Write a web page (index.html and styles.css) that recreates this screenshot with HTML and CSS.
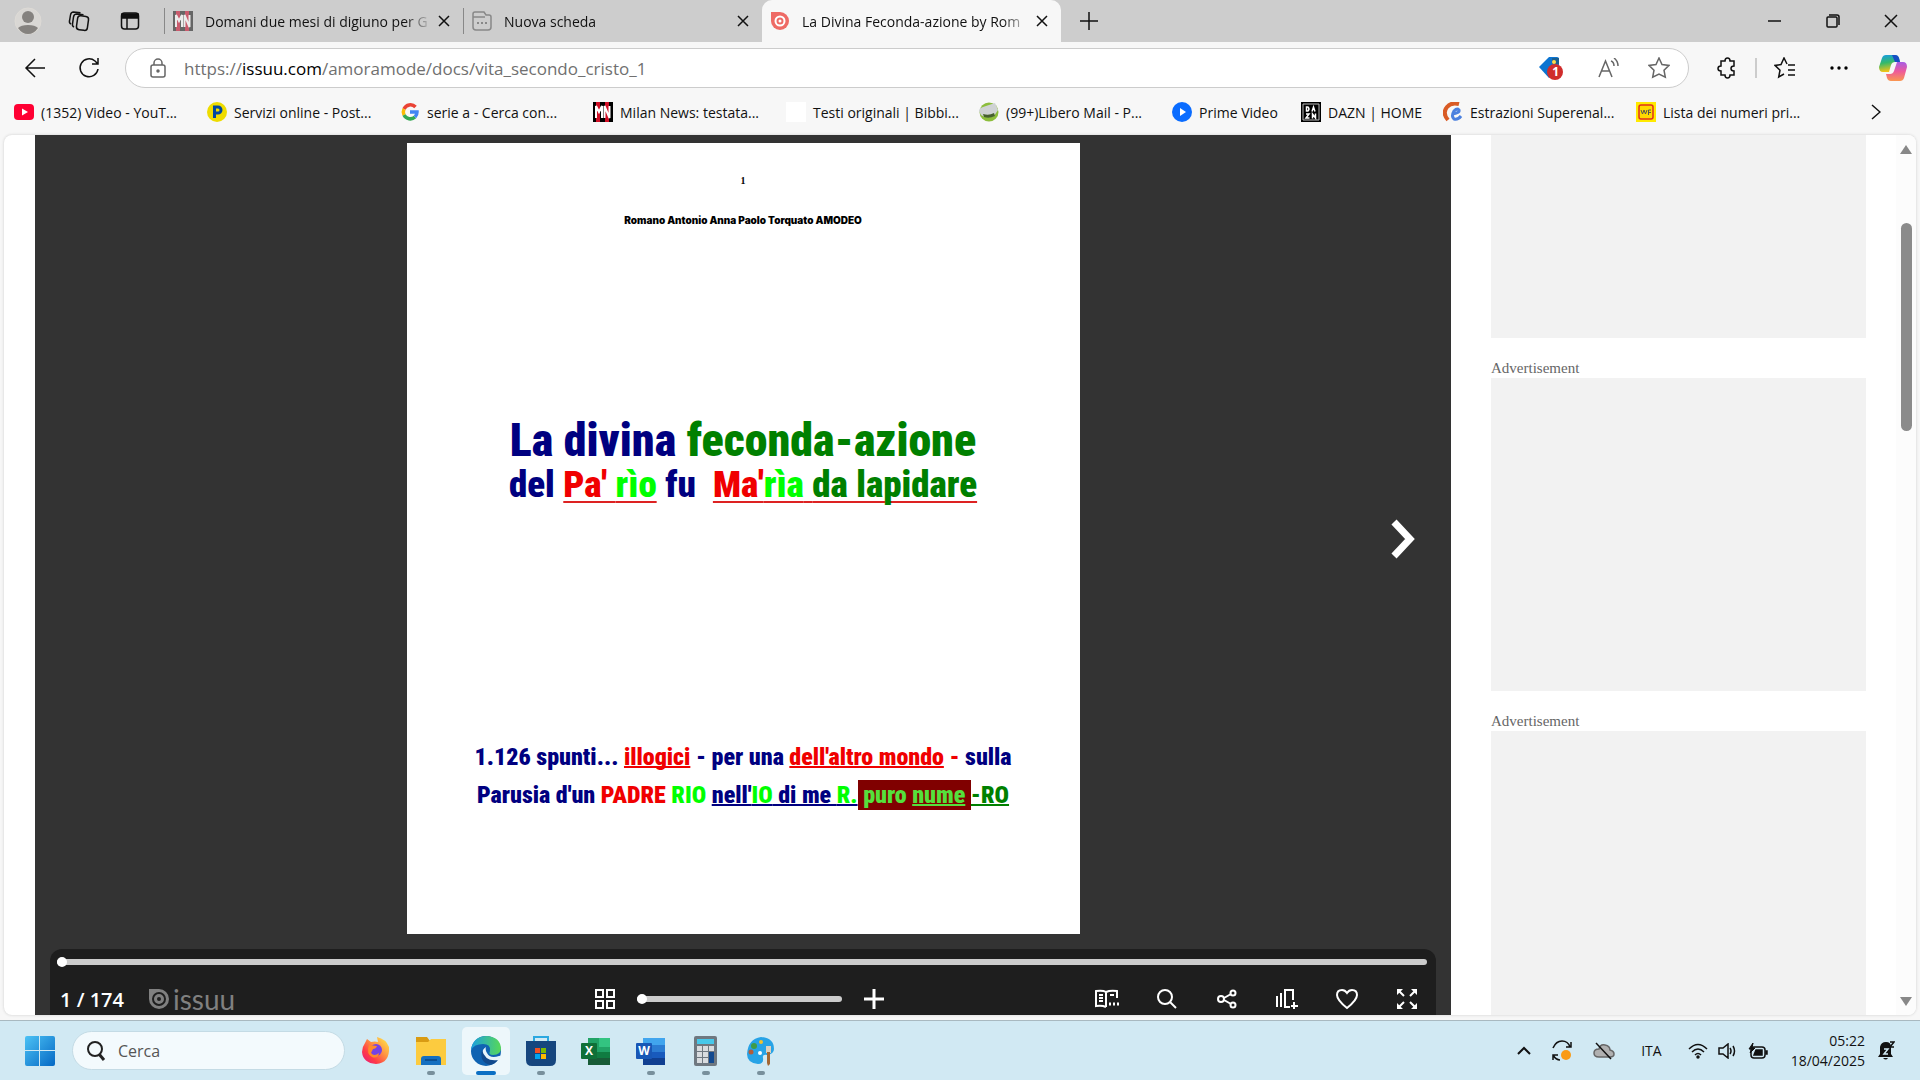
FILE: index.html
```
<!DOCTYPE html>
<html lang="it">
<head>
    <meta charset="UTF-8">
    <meta name="viewport" content="width=device-width, initial-scale=1.0">
    <title>La Divina Feconda-azione by Romano Amodeo - Issuu</title>
    <link rel="stylesheet" href="styles.css">
</head>
<body>

    <!-- Barra delle schede -->
    <header class="tab-strip">
        <div class="strip-tools">
            <button class="icon-button" aria-label="Profilo">
                <svg width="28" height="28" viewBox="0 0 28 28"><circle cx="14" cy="14" r="13" fill="#d9d7d4" stroke="#dedbd6"/><circle cx="14" cy="10" r="6" fill="#85827f"/><path d="M4 21q3-3 10-3t10 3q-4 6-10 6t-10-6z" fill="#85827f"/></svg>
            </button>
            <button class="icon-button" aria-label="Aree di lavoro">
                <svg width="22" height="22" viewBox="0 0 22 22" class="line"><rect x="9" y="6" width="11" height="14" rx="3" transform="rotate(8 14 13)"/><path d="M6 17q-2-1-1.500-3l1-7q.5-3 3-3l7 .8M3 14q-2-1-1.500-3l1-6q.5-3 3-3l7 .8"/></svg>
            </button>
            <button class="icon-button" aria-label="Schede verticali">
                <svg width="20" height="20" viewBox="0 0 20 20" class="line"><rect x="1.500" y="2" width="17" height="16" rx="3"/><path d="M2 3h16v4H2z" fill="#111"/><path d="M7 7v11"/></svg>
            </button>
        </div>
        <nav class="tabs">
            <div class="tab">
                <svg class="favicon faded" viewBox="0 0 20 20"><path fill="#222" d="M0 0h20v20H0z"/><path fill="#c8102e" d="M3 0h4v20H3zM12 0h4v20h-4z"/><path d="M3 16V4l3 6 3-6v12M11.500 16V4l5 12V4" fill="none" stroke="#fff" stroke-width="2"/></svg>
                <a href="#" class="tab-title">Domani due mesi di digiuno per G</a>
                <button class="tab-close" aria-label="Chiudi scheda"><svg width="12" height="12" viewBox="0 0 12 12" class="line"><path d="M1 1l10 10M11 1L1 11"/></svg></button>
            </div>
            <div class="tab">
                <svg class="favicon" viewBox="0 0 20 20" fill="none" stroke="#888" stroke-width="1.500"><path d="M3 1h9l2 3h3q2 0 2 2v10q0 3-3 3H4q-3 0-3-3V3q0-2 2-2zM1 6h12"/><path d="M5 12h2M9 12h2M13 12h2" stroke-width="2"/></svg>
                <a href="#" class="tab-title">Nuova scheda</a>
                <button class="tab-close" aria-label="Chiudi scheda"><svg width="12" height="12" viewBox="0 0 12 12" class="line"><path d="M1 1l10 10M11 1L1 11"/></svg></button>
            </div>
            <div class="tab active">
                <svg class="favicon" viewBox="0 0 20 20"><path fill="#ee6a65" d="M1 1h9a9 9 0 1 1-9 9z"/><circle cx="10" cy="10" r="4.500" fill="none" stroke="#fff" stroke-width="2"/><circle cx="10" cy="10" r="1.500" fill="#fff"/></svg>
                <a href="#" class="tab-title">La Divina Feconda-azione by Rom</a>
                <button class="tab-close" aria-label="Chiudi scheda"><svg width="12" height="12" viewBox="0 0 12 12" class="line"><path d="M1 1l10 10M11 1L1 11"/></svg></button>
            </div>
            <button class="icon-button new-tab" aria-label="Nuova scheda"><svg width="18" height="18" viewBox="0 0 18 18" class="line"><path d="M9 0v18M0 9h18"/></svg></button>
        </nav>
        <div class="window-buttons">
            <button aria-label="Riduci"><svg width="14" height="14" viewBox="0 0 14 14" class="line"><path d="M0 7h13"/></svg></button>
            <button aria-label="Ripristina"><svg width="14" height="14" viewBox="0 0 14 14" class="line"><rect x="1" y="3" width="10" height="10" rx="1"/><path d="M3 1h8q2 0 2 2v8"/></svg></button>
            <button aria-label="Chiudi"><svg width="14" height="14" viewBox="0 0 14 14" class="line"><path d="M1 1l12 12M13 1L1 13"/></svg></button>
        </div>
    </header>

    <!-- Barra degli indirizzi -->
    <div class="toolbar">
        <button class="icon-button" aria-label="Indietro"><svg width="22" height="22" viewBox="0 0 22 22" class="line"><path d="M21 11H2M11 2l-9 9 9 9"/></svg></button>
        <button class="icon-button" aria-label="Aggiorna"><svg width="22" height="22" viewBox="0 0 22 22" class="line"><path d="M20 12a9 9 0 1 1-3-8l3 3M20 1v6h-6"/></svg></button>
        <div class="address-bar">
            <svg width="16" height="20" viewBox="0 0 16 20" class="line gray"><rect x="1" y="7" width="14" height="12" rx="2"/><path d="M4 7V5a4 4 0 0 1 8 0v2"/><circle cx="8" cy="13" r="1" fill="#555"/></svg>
            <a href="#" class="url">https://<b>issuu.com</b>/amoramode/docs/vita_secondo_cristo_1</a>
            <button class="icon-button shopping" aria-label="Acquisti"><svg width="26" height="24" viewBox="0 0 26 24"><path d="M1 11L11 1h8q2 0 2 2v9L11 22z" fill="#0b74d1"/><path d="M14 2h7v6h-7z" fill="#1b5f8f"/><circle cx="16" cy="6" r="2" fill="#ffd94a"/><circle cx="17" cy="16" r="8" fill="#d02c2c"/></svg><span class="badge">1</span></button>
            <button class="icon-button" aria-label="Leggi ad alta voce"><svg width="22" height="20" viewBox="0 0 22 20" class="line gray"><path d="M1 19L7.500 3 14 19M3.500 13h8M13 3q3 1 3 5M16 0q4 3 4 8"/></svg></button>
            <button class="icon-button" aria-label="Preferiti"><svg width="22" height="22" viewBox="0 0 22 22" class="line gray"><path d="M11 1l3 6.500 7 .9-5 4.800 1.300 7L11 17l-6.300 3.200L6 13.200 1 8.400l7-.9z"/></svg></button>
        </div>
        <button class="icon-button" aria-label="Estensioni"><svg width="22" height="22" viewBox="0 0 22 22" class="line"><path d="M5 4h4q0-3 2.500-3T14 4h4v5q-3 0-3 2.500T18 14v4h-4q0 3-2.500 3T9 18H5v-4q-3 0-3-2.500T5 9z"/></svg></button>
        <span class="separator"></span>
        <button class="icon-button" aria-label="Elenco preferiti"><svg width="22" height="22" viewBox="0 0 22 22" class="line"><path d="M13 7l-3-6-3 6.500-6 .9 5 4.800L4.700 20l5.300-3M14 8h7M14 13h7M14 18h7"/></svg></button>
        <button class="icon-button more" aria-label="Impostazioni e altro"><svg width="18" height="4" viewBox="0 0 18 4"><circle cx="2" cy="2" r="1.700"/><circle cx="9" cy="2" r="1.700"/><circle cx="16" cy="2" r="1.700"/></svg></button>
        <button class="icon-button copilot" aria-label="Copilot">
            <svg width="28" height="26" viewBox="0 0 28 26">
                <defs>
                    <linearGradient id="cop1" x2="0.2" y2="1"><stop offset="0" stop-color="#159bea"/><stop offset=".5" stop-color="#35b96a"/><stop offset="1" stop-color="#f2c418"/></linearGradient>
                    <linearGradient id="cop2" x2="0" y2="1"><stop offset="0" stop-color="#a75de5"/><stop offset=".5" stop-color="#ee5a9a"/><stop offset="1" stop-color="#fa9750"/></linearGradient>
                </defs>
                <path d="M7 0h9q3 0 4 3l1 4h-5q-3 0-4 3l-2 7H4q-4 0-4-5L3 3q1-3 4-3z" fill="url(#cop1)"/>
                <path d="M13 0h3q3 0 4 3l1 4h-5z" fill="#174fc4"/>
                <path d="M21 26h-9q-3 0-4-3l-1-4h4q3 0 4-3l3-9h6q4 0 4 5l-3 11q-1 3-4 3z" fill="url(#cop2)"/>
            </svg>
        </button>
    </div>

    <!-- Barra dei preferiti -->
    <nav class="bookmarks">
        <a href="#" class="bookmark"><svg viewBox="0 0 20 20"><rect y="2" width="20" height="16" rx="4" fill="#ff0033"/><path d="M8 6.500v7l6-3.500z" fill="#fff"/></svg><span>(1352) Video - YouT...</span></a>
        <a href="#" class="bookmark"><svg viewBox="0 0 20 20"><circle cx="10" cy="10" r="10" fill="#eedc00"/><path d="M7.500 16V5h3.500a3 3 0 0 1 0 6H8" fill="none" stroke="#0047a0" stroke-width="3"/></svg><span>Servizi online - Post...</span></a>
        <a href="#" class="bookmark"><svg viewBox="0 0 20 20" fill="none" stroke-width="3.500"><path d="M15.500 5A7 7 0 0 0 4 7" stroke="#ea4335"/><path d="M4 7a7 7 0 0 0 0 6" stroke="#fbbc05"/><path d="M4 13a7 7 0 0 0 11 2" stroke="#34a853"/><path d="M15 15a7 7 0 0 0 2-5h-7" stroke="#4285f4"/></svg><span>serie a - Cerca con...</span></a>
        <a href="#" class="bookmark"><svg viewBox="0 0 20 20"><path d="M0 0h20v20H0z"/><path fill="#d01027" d="M3 0h4v20H3zM12 0h4v20h-4z"/><path d="M3 16V4l3 6 3-6v12M11.500 16V4l5 12V4" fill="none" stroke="#fff" stroke-width="2"/></svg><span>Milan News: testata...</span></a>
        <a href="#" class="bookmark"><svg viewBox="0 0 20 20"><path d="M0 0h20v20H0z" fill="#fff"/></svg><span>Testi originali | Bibbi...</span></a>
        <a href="#" class="bookmark"><svg viewBox="0 0 20 20"><circle cx="10" cy="10" r="9.500" fill="#8cbd3b"/><path d="M0 9q0-3 4-4l12-4 3 7-4 6q-8 3-13-1z" fill="#cfd2d4"/><path d="M4 12q6 2 11-1l1 3q-6 3-11 1z" fill="#46602e"/></svg><span>(99+)Libero Mail - P...</span></a>
        <a href="#" class="bookmark prime"><svg viewBox="0 0 20 20"><circle cx="10" cy="10" r="10" fill="#0a6cff"/><path d="M8 6v8l6-4z" fill="#fff"/></svg><span>Prime Video</span></a>
        <a href="#" class="bookmark dazn"><svg viewBox="0 0 20 20"><path d="M0 0h20v20H0z"/><path d="M2 2h16v16H2z" fill="none" stroke="#bbb"/><path d="M5.500 5v4H7q2-2 0-4zM11 9.500L12.500 5 14 9.500M5 12h3l-3 4h3.500M11.500 16.500V12l3 4v-4.500" fill="none" stroke="#fff" stroke-width="1.500"/></svg><span>DAZN | HOME</span></a>
        <a href="#" class="bookmark"><svg viewBox="0 0 20 20" fill="none"><path d="M5 18Q-1 11 4 5q4-5 12-3" stroke="#d95b25" stroke-width="4"/><path d="M9 12q8-1 7-4-2-2-5 1-3 5 0 8 4 1 7-3" stroke="#4b80df" stroke-width="3"/></svg><span>Estrazioni Superenal...</span></a>
        <a href="#" class="bookmark"><svg viewBox="0 0 20 20"><path d="M0 0h20v20H0z" fill="#ffea00"/><rect x="3" y="3" width="14" height="14" rx="2" fill="#ffd900" stroke="#e0301e" stroke-width="1.500"/><path d="M5 8l1.500 4L8 8l1.500 4L11 8M12.500 13V8H15M12.500 10.500H15" fill="none" stroke="#555"/></svg><span>Lista dei numeri pri...</span></a>
        <button class="icon-button overflow" aria-label="Altri preferiti"><svg width="10" height="16" viewBox="0 0 10 16" class="line"><path d="M1 1l8 7-8 7"/></svg></button>
    </nav>

    <!-- Contenuto della pagina -->
    <div class="viewport">
        <main class="reader">
            <article class="sheet">
                <p class="page-number">1</p>
                <p class="author">Romano Antonio Anna Paolo Torquato AMODEO</p>
                <h1 class="title">
                    La divina <span class="green">feconda-azione</span>
                    <small>del <u><span class="red">Pa' </span><span class="lime">rìo</span></u> fu&nbsp; <u><span class="red">Ma'</span><span class="lime">rìa</span> <span class="green">da lapidare</span></u></small>
                </h1>
                <p class="subtitle">
                    1.126 spunti... <u class="red">illogici</u> - per una <u class="red">dell'altro mondo</u><span class="red"> -</span> sulla<br>
                    Parusia d'un <span class="red">PADRE</span> <span class="lime">RIO</span> <u>nell'<span class="lime">IO</span> di me <span class="lime">R.</span></u><mark>&nbsp;puro <u>nume</u>&nbsp;</mark><u class="green">-RO</u>
                </p>
            </article>
            <button class="next-page" aria-label="Pagina successiva"><svg width="24" height="40" viewBox="0 0 24 40"><path d="M3 3l16 17L3 37" fill="none" stroke="#fff" stroke-width="7"/></svg></button>
            <div class="controls">
                <input type="range" class="progress" min="1" max="174" value="1" aria-label="Pagina">
                <div class="control-row">
                    <div class="control-left">
                        <span class="counter">1 / 174</span>
                        <a href="#" class="brand"><svg width="20" height="20" viewBox="0 0 20 20"><path fill="#808080" d="M0 0h10a10 10 0 1 1-10 10z"/><circle cx="10" cy="10" r="6" fill="none" stroke="#1e1e1e" stroke-width="2"/><circle cx="10" cy="10" r="2" fill="#1e1e1e"/></svg>issuu</a>
                    </div>
                    <div class="control-zoom">
                        <button aria-label="Miniature"><svg width="20" height="20" viewBox="0 0 20 20"><path d="M1 1h7v7H1zM12 1h7v7h-7zM1 12h7v7H1zM12 12h7v7h-7z"/></svg></button>
                        <input type="range" class="zoom" min="0" max="100" value="0" aria-label="Zoom">
                        <button aria-label="Ingrandisci"><svg width="20" height="20" viewBox="0 0 20 20"><path d="M10 0v20M0 10h20" stroke-width="3"/></svg></button>
                    </div>
                    <div class="control-right">
                        <button aria-label="Leggi articolo"><svg width="24" height="20" viewBox="0 0 24 20"><path d="M11 18q-4-2-10-1V2q7-1 10 1v15M11 3q4-2 11-1v7M4 6h4M4 9h4M4 12h4M15 6h4"/><path d="M14 15h2M18 15h2M22 15h2" stroke-width="3"/></svg></button>
                        <button aria-label="Cerca"><svg width="20" height="20" viewBox="0 0 20 20"><circle cx="8" cy="8" r="7"/><path d="M13 13l6 6"/></svg></button>
                        <button aria-label="Condividi"><svg width="20" height="20" viewBox="0 0 20 20"><circle cx="4" cy="10" r="3"/><circle cx="16" cy="4" r="2.500"/><circle cx="16" cy="16" r="2.500"/><path d="M7 9l7-4M7 11l7 4"/></svg></button>
                        <button aria-label="Aggiungi alla raccolta"><svg width="22" height="22" viewBox="0 0 22 22"><path d="M1 8v11M5 5v14M17 12V2H9v17h5M18 14v7M15 18h7"/></svg></button>
                        <button aria-label="Mi piace"><svg width="24" height="22" viewBox="0 0 24 22"><path d="M12 20Q2 12 2 7q0-5 5-5 3 0 5 3 2-3 5-3 5 0 5 5 0 5-10 13z"/></svg></button>
                        <button aria-label="Schermo intero"><svg width="20" height="20" viewBox="0 0 20 20"><path d="M1 1l6 6M19 1l-6 6M1 19l6-6M19 19l-6-6"/><path d="M0 0h6L0 6zM20 0v6l-6-6zM0 20v-6l6 6zM20 20h-6l6-6z" fill="#fff" stroke="none"/></svg></button>
                    </div>
                </div>
            </div>
        </main>
        <aside class="ads">
            <div class="ad first"></div>
            <span class="ad-label">Advertisement</span>
            <div class="ad"></div>
            <span class="ad-label">Advertisement</span>
            <div class="ad"></div>
        </aside>
        <div class="scrollbar">
            <svg width="14" height="10" viewBox="0 0 14 10"><path d="M7 0l6 9H1z"/></svg>
            <div class="scroll-track"><div class="scroll-thumb"></div></div>
            <svg width="14" height="10" viewBox="0 0 14 10"><path d="M7 10l6-9H1z"/></svg>
        </div>
    </div>

    <!-- Barra delle applicazioni -->
    <footer class="taskbar">
        <button class="start" aria-label="Start"><svg width="30" height="30" viewBox="0 0 30 30"><defs><linearGradient id="win" x2="1" y2="1"><stop offset="0" stop-color="#4cc2f5"/><stop offset="1" stop-color="#0568c4"/></linearGradient></defs><path fill="url(#win)" d="M2 0h12v14H0V2q0-2 2-2zM15 0h13q2 0 2 2v12H15zM0 15h14v15H2q-2 0-2-2zM15 15h15v13q0 2-2 2H15z"/></svg></button>
        <label class="search">
            <svg width="20" height="20" viewBox="0 0 20 20" fill="none" stroke="#222" stroke-width="2"><circle cx="9" cy="8" r="7"/><path d="M13 13l5 6" stroke-width="3"/></svg>
            <input type="text" placeholder="Cerca" aria-label="Cerca">
        </label>
        <div class="apps">
            <button aria-label="Firefox"><svg viewBox="0 0 30 30"><defs><linearGradient id="fox" x1="1" x2="0" y2="1"><stop offset="0" stop-color="#fff44f"/><stop offset=".4" stop-color="#ff9640"/><stop offset=".7" stop-color="#ff3b47"/><stop offset="1" stop-color="#e31587"/></linearGradient></defs><path fill="url(#fox)" d="M4 7l2-4 4 3q4-1 7 0l-1-5q9 2 12 10 1 16-13 17Q2 27 1 16q0-5 3-9z"/><circle cx="15" cy="14" r="6" fill="#7542e5"/><path d="M8 9l8 1q-1 3-4 3l-2 4q3 4 8 0-1 6-7 4-6-3-3-12z" fill="#ff8a2b"/></svg></button>
            <button class="running" aria-label="Esplora file"><svg viewBox="0 0 30 30"><path d="M0 1h11l3 4v5H0z" fill="#d99b13"/><path d="M0 6h12l3-3h15v26H0z" fill="#fccb3f"/><path d="M5 29v-6q0-3 3-3h14q3 0 3 3v6z" fill="#146fc0"/><path d="M9 24h12" stroke="#0a4f93" stroke-width="2"/></svg></button>
            <button class="running current" aria-label="Edge"><svg viewBox="0 0 30 30"><defs><linearGradient id="edge" x2="1"><stop offset="0" stop-color="#1a9fe0"/><stop offset="1" stop-color="#57d957"/></linearGradient></defs><circle cx="15" cy="15" r="15" fill="#1063b2"/><path d="M0 14Q2 0 16 0q13 1 14 12 0 7-8 7-5 0-3-4 1-7-7-7Q3 8 0 14z" fill="url(#edge)"/><path d="M15 11q-5 3-3 9 4 8 15 5l2-3q2-3-1-2-9 3-12-3-2-3-1-6z" fill="#e8f5fb"/><path d="M11 14q-3 12 8 15 5-1 8-5-13 2-16-10z" fill="#124a8d"/></svg></button>
            <button class="running" aria-label="Microsoft Store"><svg viewBox="0 0 30 30"><path d="M8 6V1h14v5" fill="none" stroke="#2ba8e0" stroke-width="2"/><path d="M0 5h30v19q0 6-6 6H6q-6 0-6-6z" fill="#16467e"/><path fill="#f25022" d="M9 12h5v5H9z"/><path fill="#7fba00" d="M15 12h5v5h-5z"/><path fill="#00a4ef" d="M9 18h5v5H9z"/><path fill="#ffb900" d="M15 18h5v5h-5z"/></svg></button>
            <button aria-label="Excel"><svg viewBox="0 0 30 30"><path d="M7 2h22v27H7z" fill="#21a366"/><path d="M18 2h11v9H18z" fill="#33c481"/><path d="M7 16h22v13H7z" fill="#107c41"/><path d="M7 22h22v7H7z" fill="#185c37"/><rect y="7" width="16" height="16" rx="1" fill="#0f7038"/></svg><span class="letter">X</span></button>
            <button class="running" aria-label="Word"><svg viewBox="0 0 30 30"><path d="M7 2h22v27H7z" fill="#41a5ee"/><path d="M7 9h22v20H7z" fill="#2b7cd3"/><path d="M7 16h22v13H7z" fill="#185abd"/><path d="M7 22h22v7H7z" fill="#103f91"/><rect y="7" width="16" height="16" rx="1" fill="#1857b6"/></svg><span class="letter">W</span></button>
            <button class="running" aria-label="Calcolatrice"><svg viewBox="0 0 30 30"><rect x="3" width="23" height="30" rx="2" fill="#6f7880"/><path d="M6 3h17v5H6z" fill="#47c8ea"/><path d="M6 10h5v5H6zM12 10h5v5h-5zM18 10h5v5h-5zM6 16h5v5H6zM12 16h5v5h-5zM6 22h5v5H6zM12 22h5v5h-5z" fill="#d9dcdf"/><path d="M18 16h5v11h-5z" fill="#134a8f"/></svg></button>
            <button class="running" aria-label="Paint"><svg viewBox="0 0 30 30"><path d="M15 1q13 1 13 12 0 5-7 6-5-1-4 3 1 6-5 6Q1 27 1 18 2 3 15 1z" fill="#27a3e6"/><circle cx="15" cy="6" r="2" fill="#f2c12e"/><circle cx="8" cy="10" r="3" fill="#3f9b46"/><circle cx="5" cy="16" r="2.500" fill="#b35c3b"/><circle cx="14" cy="17" r="2" fill="#fff"/><path d="M20 10h5v7h-5z" fill="#ddd0be"/><path d="M21 16h3v12l-2 2-1-3z" fill="#a36733"/></svg></button>
        </div>
        <div class="tray">
            <button aria-label="Mostra icone nascoste"><svg width="14" height="9" viewBox="0 0 14 9" class="line"><path d="M1 8l6-6 6 6" stroke-width="2"/></svg></button>
            <button aria-label="Aggiornamento"><svg width="22" height="22" viewBox="0 0 22 22" class="line"><path d="M2 8q3-7 9-7t8 6M20 2v5h-5M9 20q-4 0-7-5M2 20v-5h5"/><circle cx="15" cy="15" r="5" fill="#f99b16" stroke="none"/></svg></button>
            <button aria-label="OneDrive"><svg width="22" height="18" viewBox="0 0 22 18" class="line"><path d="M6 15q-5 0-5-4t5-4q1-5 6-4t5 5q4 1 4 4t-4 3z" fill="#b0b0b0" stroke="#666"/><path d="M3 1l15 16"/></svg></button>
            <button class="lang">ITA</button>
            <button class="quick" aria-label="Rete, volume e batteria">
                <svg width="20" height="16" viewBox="0 0 20 16" class="line"><path d="M1 6q9-9 18 0M4 9q6-6 12 0M7 12q3-3 6 0"/><circle cx="10" cy="14" r="1" fill="#111"/></svg>
                <svg width="20" height="16" viewBox="0 0 20 16" class="line"><path d="M1 5h4l5-4v14l-5-4H1zM12 5q2 3 0 6M15 3q3 5 0 10"/></svg>
                <svg width="20" height="16" viewBox="0 0 20 16" class="line"><rect x="3" y="4" width="14" height="11" rx="3"/><path d="M8 7h6v5H6zM18 8h1v3h-1z" fill="#111"/><path d="M5 0L1 6h3L2 10l5-5H4z" fill="#111" stroke-width="1"/></svg>
            </button>
            <div class="clock"><time>05:22</time><span>18/04/2025</span></div>
            <button aria-label="Notifiche"><svg width="18" height="20" viewBox="0 0 18 20"><path d="M3 6q1-5 6-5t5 5v7l2 3H1l2-3zM6 17h5q-2 3-5 0z" fill="#111"/><path d="M7 8h4l-4 5h4" fill="none" stroke="#d1e9f3" stroke-width="1.500"/><path d="M13 1h4l-4 5h4" fill="none" stroke="#111" stroke-width="1.500"/></svg></button>
        </div>
    </footer>

</body>
</html>
```

FILE: styles.css
```
* {
    box-sizing: border-box;
}

body {
    margin: 0;
    height: 100vh;
    display: flex;
    flex-direction: column;
    overflow: hidden;
    background: #f7f7f7;
    color: #111;
    font-family: 'Open Sans', 'Noto Sans', sans-serif;
    font-size: 14px;
}

a {
    color: inherit;
    text-decoration: none;
}

button {
    display: flex;
    align-items: center;
    justify-content: center;
    padding: 0;
    border: none;
    background: none;
    color: inherit;
    font: inherit;
}

svg {
    display: block;
    flex-shrink: 0;
}

.line {
    fill: none;
    stroke: #111;
    stroke-width: 1.5;
}

.line.gray {
    stroke: #666;
}

.icon-button {
    width: 32px;
    height: 32px;
    flex-shrink: 0;
}

/* Barra delle schede */
.tab-strip {
    display: flex;
    height: 42px;
    flex-shrink: 0;
    background: #cdcdcd;
}

.strip-tools {
    display: flex;
    align-items: center;
    gap: 19px;
    width: 164px;
    padding-left: 12px;
}

.tabs {
    display: flex;
    align-items: center;
    flex: 1;
}

.tab {
    display: flex;
    align-items: center;
    width: 299px;
    height: 26px;
    padding: 0 9px 0 8px;
    border-left: 1px solid #888;
}

.tab.active {
    height: 42px;
    background: #f7f7f7;
    border-left: none;
    border-radius: 10px 10px 0 0;
}

.favicon {
    width: 20px;
    height: 20px;
}

.favicon.faded {
    opacity: 0.6;
}

.tab-title {
    flex: 1;
    margin: 0 2px 0 12px;
    white-space: nowrap;
    mask-image: linear-gradient(to right, #000 88%, transparent);
}

.tab-close {
    width: 20px;
    height: 20px;
}

.new-tab {
    margin-left: 12px;
}

.window-buttons {
    display: flex;
}

.window-buttons button {
    width: 58px;
}

/* Barra degli indirizzi */
.toolbar {
    display: flex;
    align-items: center;
    height: 52px;
    flex-shrink: 0;
    padding: 0 11px 0 19px;
    gap: 22px;
}

.address-bar {
    display: flex;
    align-items: center;
    flex: 1;
    height: 40px;
    margin-left: -2px;
    padding: 0 13px 0 24px;
    gap: 18px;
    background: #fff;
    border: 1px solid #ccc;
    border-radius: 20px;
}

.url {
    flex: 1;
    font-size: 17px;
    color: #707070;
}

.url b {
    font-weight: normal;
    color: #000;
}

.shopping {
    position: relative;
    margin-right: 8px;
}

.badge {
    position: absolute;
    right: 8px;
    bottom: 4px;
    font-size: 12px;
    line-height: 16px;
    font-weight: bold;
    color: #fff;
}

.separator {
    width: 2px;
    height: 20px;
    margin: 0 -10px;
    background: #ccc;
}

/* Barra dei preferiti */
.bookmarks {
    display: flex;
    align-items: center;
    height: 36px;
    flex-shrink: 0;
    padding-left: 14px;
}

.bookmark {
    display: flex;
    align-items: center;
    gap: 7px;
    width: 193px;
    white-space: nowrap;
}

.bookmark.prime {
    width: 129px;
}

.bookmark.dazn {
    width: 142px;
}

.bookmark svg {
    width: 20px;
    height: 20px;
}

.overflow {
    margin: 0 28px 0 auto;
}

/* Contenuto della pagina */
.viewport {
    display: flex;
    flex: 1;
    min-height: 0;
    margin: 5px 4px;
    padding-left: 31px;
    overflow: hidden;
    background: #fff;
    border-radius: 8px;
    box-shadow: 0 0 3px #ccc;
}

.reader {
    position: relative;
    display: flex;
    flex-direction: column;
    align-items: center;
    flex: 1;
    padding: 8px 15px 0;
    background: #333;
}

.sheet {
    display: flex;
    flex-direction: column;
    align-items: center;
    flex: 1;
    aspect-ratio: 673 / 791;
    background: #fff;
    color: #000080;
    font-family: 'Roboto Condensed', sans-serif;
    font-weight: 900;
    text-align: center;
    white-space: nowrap;
}

.sheet p {
    margin: 0;
}

.sheet .page-number {
    margin-top: 32px;
    font: bold 10px/12px 'Liberation Serif', serif;
    color: #000;
}

.sheet .author {
    margin-top: 26px;
    font: 900 10px/14px 'Inter', sans-serif;
    color: #000;
}

.title {
    margin: auto 0 46px;
    font-size: 46px;
    line-height: 50px;
    font-weight: 900;
}

.title small {
    display: block;
    font-size: 37px;
    line-height: 40px;
}

.title u {
    text-decoration: underline 2px #d22;
    text-underline-offset: 4px;
    text-decoration-skip-ink: none;
}

.sheet .subtitle {
    margin: auto 0 120px;
    font-size: 24px;
    line-height: 38px;
}

.subtitle u {
    text-decoration-thickness: 2px;
    text-decoration-skip-ink: none;
}

.red {
    color: #f00000;
}

.green {
    color: #008000;
}

.lime {
    color: #00ff00;
}

mark {
    padding: 1px 0;
    background: #800000;
    color: #55e03c;
}

.next-page {
    position: absolute;
    right: 32px;
    top: 50%;
    width: 32px;
    height: 60px;
    margin-top: -66px;
}

.controls {
    width: 100%;
    margin-top: 15px;
    padding: 10px 9px 0 7px;
    background: #1e1e1e;
    border-radius: 12px 12px 0 0;
    color: #fff;
}

input[type="range"] {
    display: block;
    appearance: none;
    height: 6px;
    margin: 0;
    background: #ccc;
    border-radius: 3px;
}

input[type="range"]::-webkit-slider-thumb {
    appearance: none;
    width: 10px;
    height: 10px;
    border-radius: 50%;
    background: #fff;
}

.progress {
    width: 100%;
}

.control-row {
    display: grid;
    grid-template-columns: 1fr auto 1fr;
    align-items: center;
    height: 50px;
    padding: 18px 8px 0 3px;
}

.control-left,
.control-zoom,
.control-right {
    display: flex;
    align-items: center;
}

.control-left {
    gap: 25px;
}

.counter {
    font-size: 20px;
    font-weight: 600;
}

.brand {
    display: flex;
    align-items: center;
    gap: 4px;
    font-family: 'Lato', sans-serif;
    font-size: 28px;
    line-height: 26px;
    color: #808080;
}

.control-zoom {
    gap: 20px;
}

.zoom {
    width: 205px;
}

.control-right {
    justify-content: flex-end;
    gap: 36px;
}

.control-row button {
    width: 24px;
    height: 24px;
}

.control-row button svg {
    fill: none;
    stroke: #fff;
    stroke-width: 2;
}

/* Pubblicità */
.ads {
    width: 445px;
    padding-left: 40px;
    font: 15px/40px 'Liberation Serif', serif;
    color: #666;
}

.ad {
    width: 375px;
    height: 313px;
    background: #f2f2f2;
}

.ad.first {
    height: 203px;
}

.ad-label {
    display: block;
    height: 40px;
    padding-top: 10px;
}

/* Barra di scorrimento */
.scrollbar {
    display: flex;
    flex-direction: column;
    align-items: center;
    width: 20px;
    padding: 10px 0 9px;
    gap: 3px;
    background: #fcfcfc;
    fill: #888;
}

.scroll-track {
    flex: 1;
    padding-top: 65px;
}

.scroll-thumb {
    width: 11px;
    height: 208px;
    border-radius: 6px;
    background: #8b8b8b;
}

/* Barra delle applicazioni */
.taskbar {
    display: flex;
    align-items: center;
    height: 60px;
    flex-shrink: 0;
    padding: 0 25px;
    background: #d1e9f3;
    border-top: 1px solid #a9b9c0;
}

.search {
    display: flex;
    align-items: center;
    gap: 10px;
    width: 273px;
    height: 39px;
    margin: 0 7px 0 17px;
    padding: 0 13px;
    background: #f3fafd;
    border: 1px solid #c4dbe5;
    border-radius: 20px;
}

.search input {
    width: 100%;
    border: none;
    background: none;
    font: 16px 'Open Sans', sans-serif;
}

.search input::placeholder {
    color: #555;
}

.apps {
    display: flex;
    gap: 7px;
}

.apps button {
    position: relative;
    width: 48px;
    height: 48px;
    border-radius: 5px;
}

.apps svg {
    width: 30px;
    height: 30px;
}

.apps .running::after {
    content: "";
    position: absolute;
    bottom: 0;
    width: 8px;
    height: 4px;
    border-radius: 2px;
    background: #78909c;
}

.apps .current {
    background: #edf7fb;
}

.apps .current::after {
    width: 20px;
    background: #0b6fc4;
}

.letter {
    position: absolute;
    left: 9px;
    width: 16px;
    font-size: 12px;
    font-weight: bold;
    text-align: center;
    color: #fff;
}

.tray {
    display: flex;
    align-items: center;
    gap: 20px;
    margin-left: auto;
}

.lang {
    margin: 0 6px;
}

.quick {
    gap: 10px;
}

.clock {
    display: flex;
    flex-direction: column;
    align-items: flex-end;
    line-height: 20px;
    margin: 0 -8px 0 3px;
}
```
